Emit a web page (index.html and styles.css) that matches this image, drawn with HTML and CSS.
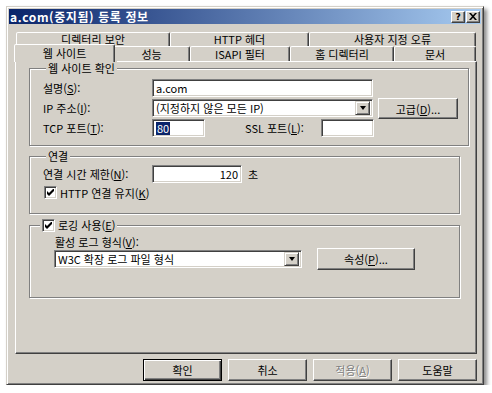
FILE: index.html
```html
<!DOCTYPE html>
<html lang="ko">
<head>
    <meta charset="UTF-8">
    <title>a.com(중지됨) 등록 정보</title>
    <link rel="stylesheet" href="styles.css">
</head>
<body>
    <div class="window">
        <!-- 제목 표시줄 -->
        <div class="titlebar">
            <span class="title">a.com(중지됨) 등록 정보</span>
            <div class="caption-buttons">
                <span class="cap-btn">?</span>
                <span class="cap-btn">
                    <svg width="8" height="7" viewBox="0 0 8 7"><path d="M0 0h2l2 2.3L6 0h2L5 3.5 8 7H6L4 4.7 2 7H0l3-3.5z"/></svg>
                </span>
            </div>
        </div>

        <div class="dialog-body">
            <!-- 탭 -->
            <div class="tab-row row-back">
                <div class="tab">디렉터리 보안</div>
                <div class="tab">HTTP 헤더</div>
                <div class="tab">사용자 지정 오류</div>
            </div>
            <div class="tab-row row-front">
                <div class="tab active">웹 사이트</div>
                <div class="tab">성능</div>
                <div class="tab">ISAPI 필터</div>
                <div class="tab">홈 디렉터리</div>
                <div class="tab">문서</div>
            </div>

            <div class="panel">
                <!-- 웹 사이트 확인 -->
                <div class="group group-site">
                    <div class="legend">웹 사이트 확인</div>
                    <div class="rows">
                        <div class="row">
                            <span class="label">설명(<u>S</u>):</span>
                            <div class="field field-wide">a.com</div>
                        </div>
                        <div class="row">
                            <span class="label">IP 주소(<u>I</u>):</span>
                            <div class="field field-wide select">
                                <span class="select-text">(지정하지 않은 모든 IP)</span>
                                <span class="drop-btn"><span class="arrow"></span></span>
                            </div>
                            <span class="btn btn-advanced">고급(<u>D</u>)...</span>
                        </div>
                        <div class="row">
                            <span class="label">TCP 포트(<u>T</u>):</span>
                            <div class="field field-port"><span class="selected">80</span></div>
                            <span class="label label-ssl">SSL 포트(<u>L</u>):</span>
                            <div class="field field-port"></div>
                        </div>
                    </div>
                </div>

                <!-- 연결 -->
                <div class="group group-conn">
                    <div class="legend">연결</div>
                    <div class="row row-timeout">
                        <span class="label">연결 시간 제한(<u>N</u>):</span>
                        <div class="field field-timeout">120</div>
                        <span class="unit">초</span>
                    </div>
                    <div class="check-row">
                        <span class="checkbox">
                            <svg width="7" height="7" viewBox="0 0 7 7"><path d="M0 2v3l2 2 5-5V-1L2 4z"/></svg>
                        </span>
                        <span>HTTP 연결 유지(<u>K</u>)</span>
                    </div>
                </div>

                <!-- 로깅 -->
                <div class="group group-log">
                    <div class="legend legend-check">
                        <span class="checkbox">
                            <svg width="7" height="7" viewBox="0 0 7 7"><path d="M0 2v3l2 2 5-5V-1L2 4z"/></svg>
                        </span>
                        <span>로깅 사용(<u>E</u>)</span>
                    </div>
                    <div class="log-row">
                        <div class="log-format">
                            <span class="label-top">활성 로그 형식(<u>V</u>):</span>
                            <div class="field select field-log">
                                <span class="select-text">W3C 확장 로그 파일 형식</span>
                                <span class="drop-btn"><span class="arrow"></span></span>
                            </div>
                        </div>
                        <span class="btn btn-props">속성(<u>P</u>)...</span>
                    </div>
                </div>
            </div>

            <!-- 하단 버튼 -->
            <div class="dialog-buttons">
                <span class="btn btn-dialog default">확인</span>
                <span class="btn btn-dialog">취소</span>
                <span class="btn btn-dialog disabled">적용(<u>A</u>)</span>
                <span class="btn btn-dialog">도움말</span>
            </div>
        </div>
    </div>
</body>
</html>
```

FILE: styles.css
```css
body {
    margin: 0;
    background-color: #fff;
    font-family: "Noto Sans CJK KR", "Noto Sans", sans-serif;
    font-size: 11px;
    color: #000;
}

u {
    text-decoration: underline;
    text-underline-offset: 1px;
}

.window {
    box-sizing: border-box;
    width: 478px;
    margin: 6px 0 0 6px;
    padding: 2px;
    background-color: #d4d0c8;
    border: 1px solid;
    border-color: #d4d0c8 #404040 #404040 #d4d0c8;
    box-shadow: inset 1px 1px #fff, inset -1px -1px #808080, 3px 3px 4px rgba(0, 0, 0, 0.45);
}

.titlebar {
    height: 15px;
    display: flex;
    align-items: center;
    justify-content: space-between;
    padding: 0 1px 0 1px;
    background: linear-gradient(to right, #0a246a, #a6caf0);
}

.title {
    color: #fff;
    font-weight: bold;
    font-size: 12px;
    letter-spacing: 0.6px;
    line-height: 15px;
}

.caption-buttons {
    display: flex;
    gap: 1px;
}

.cap-btn {
    box-sizing: border-box;
    width: 14px;
    height: 12px;
    display: flex;
    justify-content: center;
    align-items: center;
    background-color: #d4d0c8;
    border: 1px solid;
    border-color: #fff #404040 #404040 #fff;
    box-shadow: inset -1px -1px #808080;
    font-family: "DejaVu Sans", sans-serif;
    font-weight: bold;
    font-size: 9px;
    line-height: 10px;
}

.dialog-body {
    padding: 8px 4px 1px 6px;
}

/* 탭 */
.tab-row {
    display: grid;
}

.row-back {
    height: 14px;
    margin-left: 1px;
    grid-template-columns: 154px 139px 167px;
}

.row-front {
    height: 15px;
    grid-template-columns: 98px 77px 100px 104px 82px;
}

.tab {
    box-sizing: border-box;
    border: 1px solid;
    border-bottom: none;
    border-color: #fff #404040 transparent #fff;
    border-radius: 2px 2px 0 0;
    box-shadow: inset -1px 0 #808080;
    background-color: #d4d0c8;
    text-align: center;
    line-height: 12px;
    overflow: hidden;
}

.row-front .tab {
    line-height: 14px;
}

.tab.active {
    position: relative;
    z-index: 1;
    margin: -2px -2px -1px -1px;
    padding-top: 2px;
    line-height: 13px;
}

.panel {
    box-sizing: border-box;
    height: 293px;
    padding: 6px 0 0 13px;
    border: 1px solid;
    border-color: #fff #404040 #404040 #fff;
    box-shadow: inset -1px -1px #808080;
}

/* 그룹 상자 */
.group {
    border: 1px solid #808080;
    box-shadow: inset 1px 1px #fff, 1px 1px #fff;
}

.legend {
    display: table;
    margin: -8px 0 0 3px;
    padding: 0 2px;
    line-height: 14px;
    background-color: #d4d0c8;
}

.group-site {
    margin-right: 7px;
    padding: 0 0 8px 13px;
}

.group-conn {
    margin: 10px 16px 0 0;
    padding: 0 0 13px 13px;
}

.group-log {
    margin: 11px 16px 0 0;
    padding: 0 0 29px 0;
}

.rows {
    margin-top: 4px;
    display: flex;
    flex-direction: column;
    gap: 2px;
}

.row {
    height: 18px;
    display: flex;
    align-items: center;
}

.label {
    width: 109px;
    flex-shrink: 0;
    line-height: 14px;
}

.label-ssl {
    width: 76px;
    margin-left: 40px;
}

/* 입력 필드 */
.field {
    box-sizing: border-box;
    height: 18px;
    padding: 0 3px;
    border: 1px solid;
    border-color: #808080 #fff #fff #808080;
    box-shadow: inset 1px 1px #404040, inset -1px -1px #d4d0c8;
    background-color: #fff;
    line-height: 16px;
    white-space: nowrap;
}

.field-wide {
    width: 221px;
}

.field-port {
    width: 53px;
}

.field-timeout {
    width: 90px;
    text-align: right;
}

.selected {
    display: inline-block;
    padding: 0 1px;
    background-color: #0a246a;
    color: #fff;
    line-height: 13px;
}

.select {
    display: flex;
    align-items: center;
    justify-content: space-between;
    padding: 0 2px 0 3px;
}

.drop-btn {
    box-sizing: border-box;
    width: 15px;
    height: 14px;
    display: flex;
    justify-content: center;
    align-items: center;
    background-color: #d4d0c8;
    border: 1px solid;
    border-color: #d4d0c8 #404040 #404040 #d4d0c8;
    box-shadow: inset 1px 1px #fff, inset -1px -1px #808080;
}

.arrow {
    width: 0;
    height: 0;
    border-left: 3.5px solid transparent;
    border-right: 3.5px solid transparent;
    border-top: 4px solid #000;
}

/* 버튼 */
.btn {
    box-sizing: border-box;
    display: flex;
    justify-content: center;
    align-items: center;
    background-color: #d4d0c8;
    border: 1px solid;
    border-color: #fff #404040 #404040 #fff;
    box-shadow: inset -1px -1px #808080;
    line-height: 14px;
}

.btn-advanced {
    width: 80px;
    height: 21px;
    margin: 0 0 -3px 5px;
    align-self: flex-start;
    margin-top: -1px;
}

.unit {
    margin-left: 6px;
}

.row-timeout {
    margin-top: 2px;
}

.check-row {
    height: 15px;
    margin-top: 2px;
    display: flex;
    align-items: center;
    gap: 3px;
    padding-left: 1px;
}

.checkbox {
    box-sizing: border-box;
    width: 13px;
    height: 13px;
    display: inline-flex;
    justify-content: center;
    align-items: center;
    background-color: #fff;
    border: 1px solid;
    border-color: #808080 #fff #fff #808080;
    box-shadow: inset 1px 1px #404040, inset -1px -1px #d4d0c8;
}

.legend-check {
    display: flex;
    align-items: center;
    gap: 3px;
    width: max-content;
    margin-left: 10px;
}

.log-row {
    display: flex;
    align-items: flex-end;
    margin: 3px 0 0 24px;
}

.label-top {
    display: block;
    height: 14px;
    line-height: 14px;
    margin-left: 1px;
}

.field-log {
    width: 248px;
    margin-top: 1px;
}

.btn-props {
    width: 98px;
    height: 22px;
    margin: 0 0 -2px 15px;
}

/* 하단 버튼 */
.dialog-buttons {
    display: flex;
    justify-content: flex-end;
    gap: 6px;
    margin-top: 5px;
}

.btn-dialog {
    width: 79px;
    height: 22px;
}

.btn-dialog.default {
    border-color: #000;
    box-shadow: inset 1px 1px #fff, inset -1px -1px #404040, inset -2px -2px #808080;
}

.btn-dialog.disabled {
    color: #808080;
    text-shadow: 1px 1px #fff;
}
```
